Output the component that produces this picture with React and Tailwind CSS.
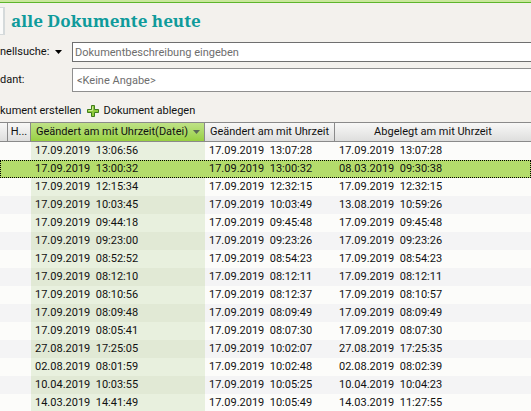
import React, { useState } from 'react';

const documents = [
  { file: '17.09.2019  13:06:56', changed: '17.09.2019  13:07:28', stored: '17.09.2019  13:07:28' },
  { file: '17.09.2019  13:00:32', changed: '17.09.2019  13:00:32', stored: '08.03.2019  09:30:38' },
  { file: '17.09.2019  12:15:34', changed: '17.09.2019  12:32:15', stored: '17.09.2019  12:32:15' },
  { file: '17.09.2019  10:03:45', changed: '17.09.2019  10:03:49', stored: '13.08.2019  10:59:26' },
  { file: '17.09.2019  09:44:18', changed: '17.09.2019  09:45:48', stored: '17.09.2019  09:45:48' },
  { file: '17.09.2019  09:23:00', changed: '17.09.2019  09:23:26', stored: '17.09.2019  09:23:26' },
  { file: '17.09.2019  08:52:52', changed: '17.09.2019  08:54:23', stored: '17.09.2019  08:54:23' },
  { file: '17.09.2019  08:12:10', changed: '17.09.2019  08:12:11', stored: '17.09.2019  08:12:11' },
  { file: '17.09.2019  08:10:56', changed: '17.09.2019  08:12:37', stored: '17.09.2019  08:10:57' },
  { file: '17.09.2019  08:09:48', changed: '17.09.2019  08:09:49', stored: '17.09.2019  08:09:49' },
  { file: '17.09.2019  08:05:41', changed: '17.09.2019  08:07:30', stored: '17.09.2019  08:07:30' },
  { file: '27.08.2019  17:25:05', changed: '17.09.2019  10:02:07', stored: '27.08.2019  17:25:35' },
  { file: '02.08.2019  08:01:59', changed: '17.09.2019  10:02:48', stored: '02.08.2019  08:02:39' },
  { file: '10.04.2019  10:03:55', changed: '17.09.2019  10:05:25', stored: '10.04.2019  10:04:23' },
  { file: '14.03.2019  14:41:49', changed: '17.09.2019  10:05:49', stored: '14.03.2019  11:27:55' },
];

const PlusIcon = () => (
  <svg width="12" height="12" viewBox="0 0 12 12" aria-hidden="true">
    <path d="M4.5 .5h3v4h4v3h-4v4h-3v-4h-4v-3h4z" fill="#8fca3c" stroke="#3f7d1c" />
    <path d="M5.5 1.5v4h-4" fill="none" stroke="#cdea94" />
  </svg>
);

const Caret = ({ className }) => (
  <svg className={className} width="7" height="4" viewBox="0 0 7 4" aria-hidden="true">
    <path d="M0 0h7L3.5 4z" fill="currentColor" />
  </svg>
);

const DocumentRow = ({ doc, index, selected, onSelect }) => {
  const odd = index % 2 === 1;
  let rowColor = odd ? 'bg-[#f4f4f5]' : 'bg-[#fcfcfa]';
  let sortedColor = odd ? 'bg-[#e1e9d5]' : 'bg-[#e8f0de]';
  if (selected) {
    rowColor = 'bg-[#b4dc6c] outline-1 -outline-offset-1 outline-dotted outline-black';
    sortedColor = '';
  }

  return (
    <tr className={`h-[18px] leading-[18px] ${rowColor}`} onClick={onSelect} aria-selected={selected}>
      <td className="p-0"></td>
      <td className="p-0"></td>
      <td className={`whitespace-pre p-0 pl-1 ${sortedColor}`}>{doc.file}</td>
      <td className="whitespace-pre p-0 pl-1">{doc.changed}</td>
      <td className="whitespace-pre p-0 pl-1">{doc.stored}</td>
    </tr>
  );
};

const App = () => {
  const [query, setQuery] = useState('');
  const [client, setClient] = useState('<Keine Angabe>');
  const [selectedIndex, setSelectedIndex] = useState(1);

  return (
    <div className="min-h-screen overflow-hidden bg-[#f3f1ed] font-[Roboto,'Liberation_Sans',sans-serif] text-[11px] text-[#111]">
      <div className="h-[3px] border-b border-[#5db52c] bg-[#c9e79c]" />

      <header className="flex items-center gap-1.5 pt-0.5 pb-1.5">
        <div className="h-7 w-[5px] border-y border-r-2 border-[#d5dadb] bg-[#fbfbfa]" />
        <h1 className="font-['Noto_Serif','DejaVu_Serif',serif] text-[17px] leading-[31px] font-bold text-[#0f9b9b]">
          alle Dokumente heute
        </h1>
      </header>

      <div className="flex flex-col gap-1.5">
        <div className="flex h-5 items-center">
          <div className="flex w-[72px] shrink-0 items-center justify-between pr-2.5">
            <label htmlFor="search">nellsuche:</label>
            <button type="button" aria-label="Suchoptionen">
              <Caret className="text-black" />
            </button>
          </div>
          <input
            id="search"
            type="text"
            value={query}
            onChange={(e) => setQuery(e.target.value)}
            placeholder="Dokumentbeschreibung eingeben"
            className="h-5 min-w-0 flex-1 border border-r-0 border-[#6f6f6f] bg-white px-0.5 outline-none placeholder:text-[#6e6e6e]"
          />
        </div>
        <div className="flex h-6 items-center">
          <label htmlFor="client" className="w-[72px] shrink-0">dant:</label>
          <input
            id="client"
            type="text"
            value={client}
            onChange={(e) => setClient(e.target.value)}
            className="h-6 min-w-0 flex-1 border border-r-0 border-[#8f8f8f] bg-white px-1 text-[#6e6e6e] outline-none"
          />
        </div>
      </div>

      <div className="flex h-[30px] items-center gap-1.5 pt-2">
        <button type="button" className="whitespace-nowrap">kument erstellen</button>
        <button type="button" className="flex items-center gap-1">
          <PlusIcon />
          Dokument ablegen
        </button>
      </div>

      <table className="w-full table-fixed border-separate border-spacing-0">
        <colgroup>
          <col className="w-2" />
          <col className="w-[23px]" />
          <col className="w-[174px]" />
          <col className="w-[130px]" />
          <col />
        </colgroup>
        <thead>
          <tr className="h-5 leading-[18px]">
            <th className="border-y border-r border-[#8a8a8a] bg-linear-to-b from-[#f8f8f7] to-[#dededd] p-0"></th>
            <th className="border-y border-r border-[#8a8a8a] bg-linear-to-b from-[#f8f8f7] to-[#dededd] p-0 font-normal">H...</th>
            <th aria-sort="descending" className="border-y border-r border-[#8a8a8a] bg-linear-to-b from-[#bfe286] to-[#97d03f] p-0 font-normal">
              <div className="flex items-center pr-1">
                <span className="flex-1 whitespace-nowrap">Geändert am mit Uhrzeit(Datei)</span>
                <Caret className="text-[#5b6b56]" />
              </div>
            </th>
            <th className="border-y border-r border-[#8a8a8a] bg-linear-to-b from-[#f8f8f7] to-[#dededd] p-0 font-normal whitespace-nowrap">Geändert am mit Uhrzeit</th>
            <th className="border-y border-[#8a8a8a] bg-linear-to-b from-[#f8f8f7] to-[#dededd] p-0 font-normal whitespace-nowrap">Abgelegt am mit Uhrzeit</th>
          </tr>
        </thead>
        <tbody>
          {documents.map((doc, index) => (
            <DocumentRow
              key={index}
              doc={doc}
              index={index}
              selected={index === selectedIndex}
              onSelect={() => setSelectedIndex(index)}
            />
          ))}
        </tbody>
      </table>
    </div>
  );
};

export default App;
